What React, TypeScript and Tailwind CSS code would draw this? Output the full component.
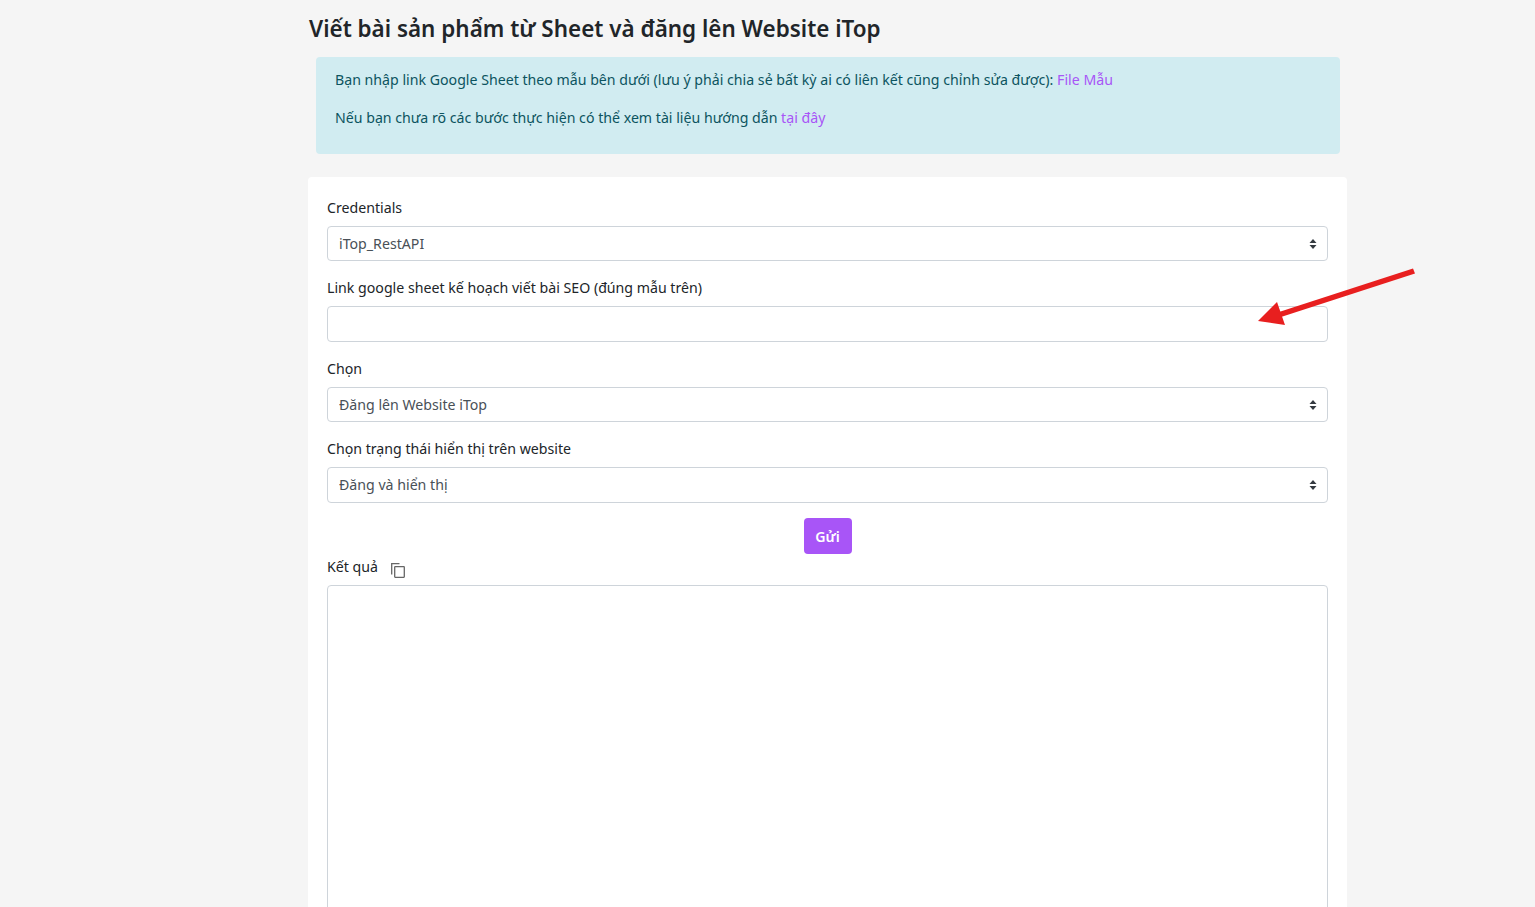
import React from 'react';

const SelectField = ({ label, value, tall }: { label: string; value: string; tall?: boolean }) => (
  <div className="mb-4">
    <label className="mb-2 block leading-[21px]">{label}</label>
    <div className="relative">
      <select
        className={`block w-full appearance-none rounded border border-[#ced4da] bg-white px-[11px] text-[#495057] outline-none ${tall ? 'h-[36px]' : 'h-[35px]'}`}
        defaultValue={value}
      >
        <option>{value}</option>
      </select>
      <svg className="pointer-events-none absolute right-[11px] top-1/2 -translate-y-1/2" width="8" height="10" viewBox="0 0 8 10" fill="#343a40">
        <path d="M4 0 L7.5 4 H0.5 Z" />
        <path d="M4 10 L0.5 6 H7.5 Z" />
      </svg>
    </div>
  </div>
);

export default function App() {
  return (
    <div className="relative h-[907px] overflow-hidden bg-[#f5f5f5] font-['Noto_Sans',sans-serif] text-[14.16px] text-[#212529]">
      <div className="ml-[308px] w-[1039px]">
        <h1 className="h-[57px] pt-[13px] pl-px text-[22.45px] font-semibold leading-[32px] whitespace-nowrap">
          Viết bài sản phẩm từ Sheet và đăng lên Website iTop
        </h1>
        <div className="ml-2 h-[97px] w-[1024px] rounded bg-[#d1ecf1] px-[19px] py-3 text-[#0c5460]">
          <p className="mb-4 leading-[22px]">
            Bạn nhập link Google Sheet theo mẫu bên dưới (lưu ý phải chia sẻ bất kỳ ai có liên kết cũng chỉnh sửa được):{' '}
            <a className="text-[#a855f7]">File Mẫu</a>
          </p>
          <p className="leading-[22px]">
            Nếu bạn chưa rõ các bước thực hiện có thể xem tài liệu hướng dẫn <a className="text-[#a855f7]">tại đây</a>
          </p>
        </div>
        <div className="mt-[23px] rounded bg-white px-[19px] pt-5 pb-10">
          <SelectField label="Credentials" value="iTop_RestAPI" />
          <div className="mb-4">
            <label className="mb-2 block leading-[21px]">Link google sheet kế hoạch viết bài SEO (đúng mẫu trên)</label>
            <input className="block h-[36px] w-full rounded border border-[#ced4da] bg-white px-3 outline-none" />
          </div>
          <SelectField label="Chọn" value="Đăng lên Website iTop" />
          <SelectField label="Chọn trạng thái hiển thị trên website" value="Đăng và hiển thị" tall />
          <div className="-mt-px flex justify-center">
            <button className="h-9 w-12 rounded bg-[#a855f7] pt-px font-semibold text-white">Gửi</button>
          </div>
          <div className="mt-px mb-[7px] flex h-[23px] items-center">
            <label className="leading-[21px]">Kết quả</label>
            <svg className="ml-[13px] mt-[7px]" width="14" height="15" viewBox="0 0 14 15" fill="none" stroke="#666" strokeWidth="1.3">
              <path d="M0.7 11.5 V0.7 H8.5" />
              <rect x="3.7" y="3.7" width="9.6" height="10.6" rx="0.5" />
            </svg>
          </div>
          <textarea className="block h-[400px] w-full rounded border border-[#ced4da] bg-white outline-none" />
        </div>
      </div>
      <svg className="pointer-events-none absolute left-[1250px] top-[262px]" width="170" height="70" viewBox="1250 262 170 70" fill="#e81f1f">
        <path d="M1413 268.5 L1415 273.5 L1281 317 L1279 312 Z" />
        <path d="M1258 321 L1277 302 L1285 325 Z" />
      </svg>
    </div>
  );
}
